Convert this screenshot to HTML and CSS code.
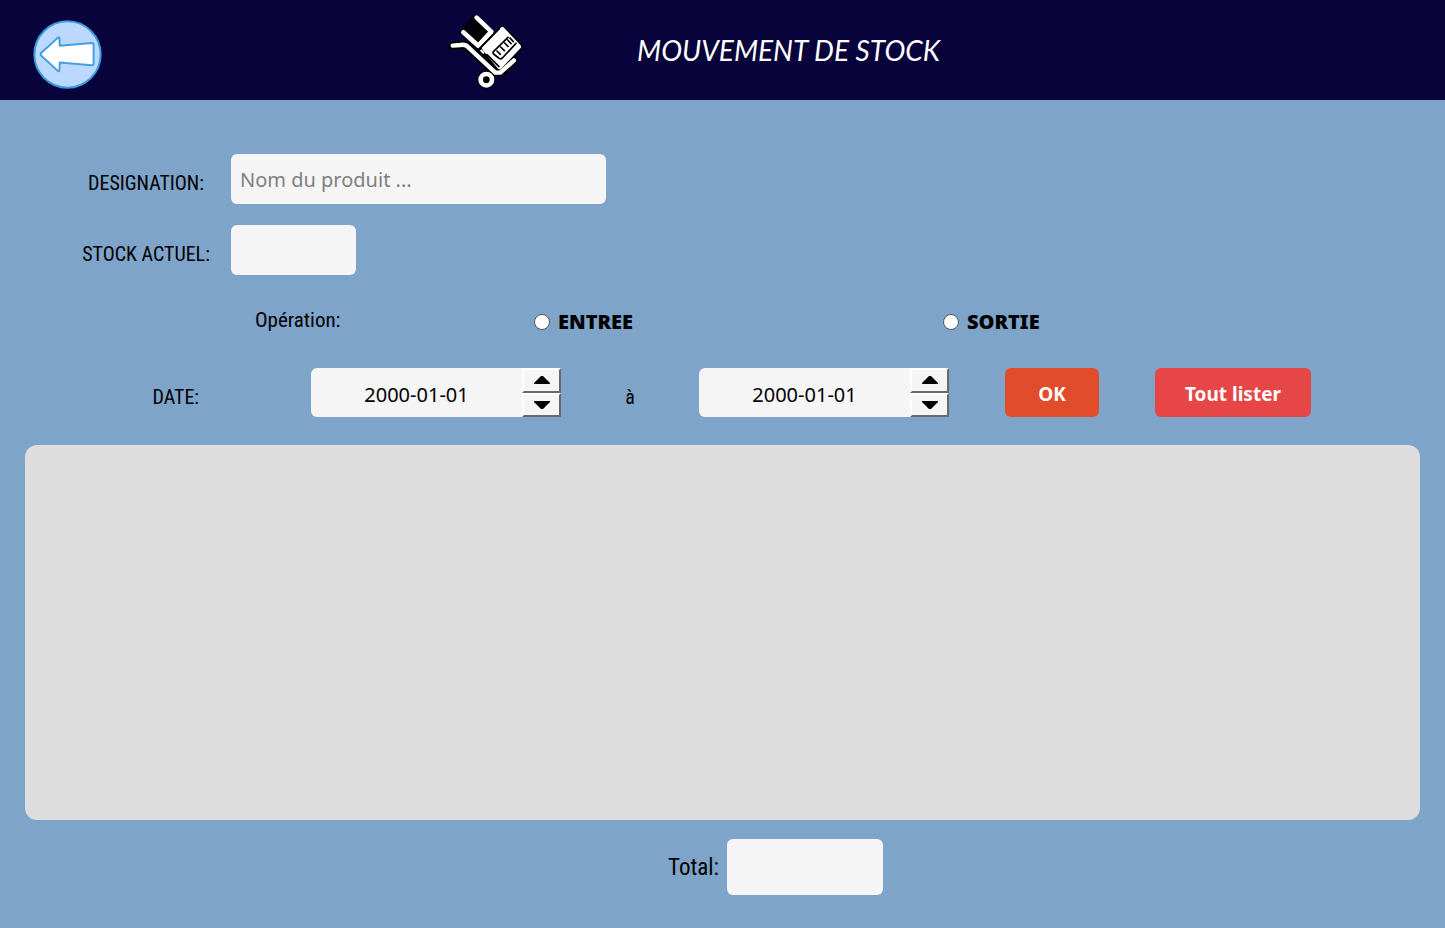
FILE: index.html
```html
<!DOCTYPE html>
<html lang="fr">
<head>
<meta charset="utf-8">
<meta name="viewport" content="width=device-width, initial-scale=1">
<title>Mouvement de stock</title>
<link rel="stylesheet" href="styles.css">
</head>
<body>
<header class="topbar">
  <div class="topbar-start">
    <button class="back" type="button" aria-label="Retour">
      <svg viewBox="0 0 206 206" width="69" height="69" aria-hidden="true">
        <circle cx="103" cy="103" r="99" fill="#bbd9fd" stroke="#3f96dc" stroke-width="6"/>
        <path d="M25 98 L74 53 Q79 49 79 56 L80 77 L176 69 Q181 69 181 74 L181 129 Q181 135 175 135 L80 127 L79 149 Q79 156 73 151 L25 107 Q21 102 25 98Z" fill="#fff" stroke="#469fe2" stroke-width="6" stroke-linejoin="round"/>
      </svg>
    </button>
  </div>
  <svg class="truck" viewBox="0 0 285 285" width="95" height="95" aria-hidden="true">
    <g stroke="#000" stroke-linejoin="round" stroke-linecap="round" fill="none">
      <path d="M72 81 L108 42 L149 79 L113 121Z" fill="#000" stroke-width="22"/>
      <path d="M187 75 L237 124 L179 187 L127 134Z" fill="#000" stroke-width="22"/>
      <path d="M38 122 L76 120 L165 203 L182 203 L222 166" stroke-width="24"/>
      <circle cx="139" cy="224" r="22" fill="#000" stroke-width="10"/>
    </g>
    <g stroke="#fff" fill="none" stroke-linejoin="round" stroke-linecap="round">
      <path d="M38 122 L61 120 Q77 117 85 127 L166 203 L181 203 L222 166" stroke-width="13"/>
      <path d="M70 82 L115 122 L154 80 L110 38" stroke-width="14"/>
      <path d="M187 73 L236 125 L179 186 L133 130Z" fill="#fff" stroke-width="14"/>
      <circle cx="139" cy="224" r="17" stroke-width="14"/>
    </g>
    <g stroke="#000" fill="none" stroke-linecap="round" stroke-linejoin="round">
      <path d="M113 136 L178 71" stroke-width="5"/>
      <path d="M141 149 L177 185" stroke-width="5"/>
      <path d="M116 135 L168 190" stroke-width="4"/>
      <path d="M161 139 L204 97 M228 115 L187 159 Q181 164 176 159 L161 147 Q157 143 161 139" stroke-width="5"/>
      <path d="M171 138 L181 148 M182 126 L193 137 M194 114 L204 124 M203 105 L213 116 M210 99 L220 110" stroke-width="5"/>
    </g>
    <path d="M122 135 L132 145 M128 128 L136 136" stroke="#fff" stroke-width="6"/>
    <path d="M97 57 L111 70 M90 65 L104 79 M83 73 L94 84" stroke="#09033b" stroke-width="3"/>
  </svg>
  <h1 class="title">MOUVEMENT DE STOCK</h1>
</header>

<main class="content">
  <form class="filters">
    <div class="row">
      <label class="label" for="designation">DESIGNATION:</label>
      <input class="field field-name" id="designation" type="text" placeholder="Nom du produit ...">
    </div>
    <div class="row">
      <label class="label" for="stock">STOCK ACTUEL:</label>
      <input class="field field-stock" id="stock" type="text">
    </div>
    <div class="row row-operation" role="radiogroup" aria-labelledby="operation">
      <span class="label label-operation" id="operation">Opération:</span>
      <label class="choice"><input class="radio" type="radio" name="operation"><span>ENTREE</span></label>
      <label class="choice"><input class="radio" type="radio" name="operation"><span>SORTIE</span></label>
    </div>
    <div class="row row-date">
      <label class="label label-date" for="from">DATE:</label>
      <div class="date">
        <input class="date-input" id="from" type="text" value="2000-01-01">
        <div class="spin">
          <button class="step" type="button" aria-label="Augmenter"><svg viewBox="0 0 16 8" width="16" height="8"><path d="M0 8V7L7 0H9L16 7V8Z"/></svg></button>
          <button class="step" type="button" aria-label="Diminuer"><svg viewBox="0 0 16 8" width="16" height="8"><path d="M0 0V1L7 8H9L16 1V0Z"/></svg></button>
        </div>
      </div>
      <label class="label label-to" for="to">à</label>
      <div class="date">
        <input class="date-input" id="to" type="text" value="2000-01-01">
        <div class="spin">
          <button class="step" type="button" aria-label="Augmenter"><svg viewBox="0 0 16 8" width="16" height="8"><path d="M0 8V7L7 0H9L16 7V8Z"/></svg></button>
          <button class="step" type="button" aria-label="Diminuer"><svg viewBox="0 0 16 8" width="16" height="8"><path d="M0 0V1L7 8H9L16 1V0Z"/></svg></button>
        </div>
      </div>
      <div class="actions">
        <button class="button button-ok" type="submit">OK</button>
        <button class="button button-all" type="button">Tout lister</button>
      </div>
    </div>
  </form>
  <section class="results" aria-label="Mouvements"></section>
  <div class="total">
    <label class="label label-total" for="total">Total:</label>
    <input class="field field-total" id="total" type="text">
  </div>
</main>
</body>
</html>
```
FILE: styles.css
```css
* { box-sizing: border-box; }

body {
  display: flex;
  flex-direction: column;
  min-height: 100vh;
  margin: 0;
  background: #7fa4c9;
  color: #000;
  font-family: "Noto Sans", "Open Sans", sans-serif;
  font-size: 20px;
}

button, input { font: inherit; }

.topbar {
  display: grid;
  grid-template-columns: 440fr auto 910fr;
  align-items: center;
  height: 100px;
  background: #09033b;
}

.topbar-start { padding: 8px 0 0 33px; }

.back {
  display: block;
  padding: 0;
  border: 0;
  border-radius: 50%;
  background: none;
  line-height: 0;
}

.truck { margin: 4px 0 0; }

.title {
  margin: 0;
  padding-left: 102px;
  color: #fff;
  font: italic 400 28px/36px Lato, sans-serif;
  white-space: nowrap;
}

.content {
  display: flex;
  flex: 1;
  flex-direction: column;
  padding: 54px 25px 33px;
}

.row {
  display: flex;
  align-items: center;
  margin-bottom: 21px;
}

.label {
  flex: none;
  width: 170px;
  padding-top: 8px;
  font: 400 20px/28px "Roboto Condensed", "Liberation Sans Narrow", sans-serif;
  text-align: center;
  white-space: nowrap;
}

.row > .label:first-child { margin-left: 36px; }

.field {
  height: 50px;
  padding: 0 9px;
  border: 0;
  border-radius: 6px;
  background: #f5f5f5;
}

.field::placeholder { color: #808080; opacity: 1; }
.field-name { width: 375px; }
.field-stock { width: 125px; }
.field-total { width: 156px; height: 56px; }

.row-operation { height: 51px; }
.row-operation > .label-operation:first-child {
  width: 279px;
  margin-left: 230px;
  padding: 0 0 4px;
  text-align: left;
}

.choice {
  display: flex;
  align-items: center;
  width: 409px;
  font-weight: 900;
}

.radio {
  appearance: none;
  width: 16px;
  height: 16px;
  margin: 0 8px 0 0;
  border: 1px solid #555;
  border-radius: 50%;
  background: #fff;
}

.radio:checked { border: 5px solid #09033b; }

.row-date { margin-bottom: 28px; }
.row > .label-date:first-child {
  margin: 0 112px 0 4px;
  text-align: right;
}

.label-to { width: 138px; }

.date {
  display: flex;
  width: 250px;
  height: 49px;
  border-radius: 6px;
  background: #f5f5f5;
}

.date-input {
  flex: 1;
  min-width: 0;
  padding: 4px 0 0;
  border: 0;
  background: none;
  text-align: center;
}

.spin {
  display: grid;
  grid-template-rows: 1fr 1fr;
  width: 39px;
}

.step {
  padding: 0;
  border: solid;
  border-width: 2px;
  border-color: #fff #696969 #696969 #fff;
  background: #f5f5f5;
  line-height: 0;
}

.actions {
  display: flex;
  gap: 56px;
  margin-left: 56px;
}

.button {
  height: 49px;
  padding: 2px 0 0;
  border: 0;
  border-radius: 6px;
  color: #fff;
  font-size: 19px;
  font-weight: 700;
}

.button-ok { width: 94px; background: #e14c2a; }
.button-all { width: 156px; background: #e64746; }

.results {
  flex: 1;
  min-height: 200px;
  border-radius: 12px;
  background: #dddddd;
}

.total {
  display: flex;
  align-items: center;
  justify-content: center;
  gap: 8px;
  margin: 19px 0 0 106px;
}

.label-total {
  width: auto;
  padding-top: 2px;
  font-size: 23px;
}

.label-operation { font-size: 21px; }
```
